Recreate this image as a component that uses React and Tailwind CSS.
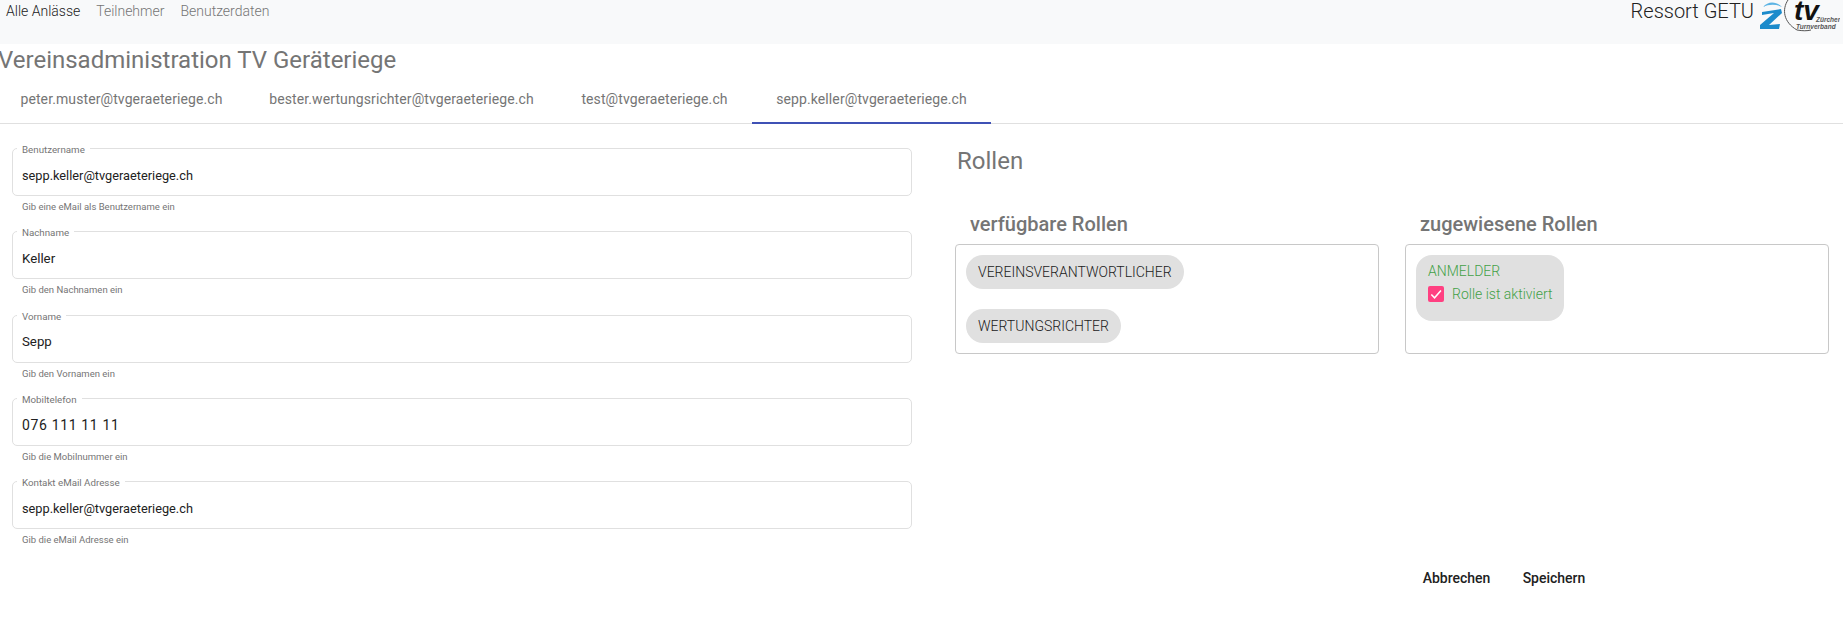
import React from "react";

const tabs = [
  { label: "peter.muster@tvgeraeteriege.ch", width: "w-[249px]" },
  { label: "bester.wertungsrichter@tvgeraeteriege.ch", width: "w-[311px]" },
  { label: "test@tvgeraeteriege.ch", width: "w-[195px]" },
  { label: "sepp.keller@tvgeraeteriege.ch", width: "w-[239px]", active: true },
];

const fields = [
  { label: "Benutzername", value: "sepp.keller@tvgeraeteriege.ch", hint: "Gib eine eMail als Benutzername ein", valueClass: "text-[12.75px]" },
  { label: "Nachname", value: "Keller", hint: "Gib den Nachnamen ein", valueClass: "text-[13.25px]" },
  { label: "Vorname", value: "Sepp", hint: "Gib den Vornamen ein", valueClass: "text-[13.25px]" },
  { label: "Mobiltelefon", value: "076 111 11 11", hint: "Gib die Mobilnummer ein", valueClass: "text-[14px] tracking-[0.65px]" },
  { label: "Kontakt eMail Adresse", value: "sepp.keller@tvgeraeteriege.ch", hint: "Gib die eMail Adresse ein", valueClass: "text-[12.75px]" },
];

const Logo = () => (
  <svg width="83" height="33" viewBox="0 0 83 33" className="shrink-0">
    <path d="M6 7 C11 1 19 1 25 7 C19 4 12 4 6 7 Z" fill="#5db4e4" />
    <path d="M5 12 L24 9 L25 13 L12 25 L23 24 L22 29 L3 29 L3 25 L17 13 L5 15 Z" fill="#1b8bcb" />
    <path d="M31 0 C25 9 26 22 40 30 C46 31 50 31 54 30" fill="none" stroke="#555" strokeWidth="1" />
    <text x="37" y="20" fontFamily="Liberation Sans" fontSize="28" fontWeight="700" fontStyle="italic" fill="#111">tv</text>
    <text x="59" y="22" fontFamily="Liberation Sans" fontSize="6.5" fontWeight="700" fontStyle="italic" fill="#555">Zürcher</text>
    <text x="39" y="28.5" fontFamily="Liberation Sans" fontSize="6.5" fontWeight="700" fontStyle="italic" fill="#555">Turnverband</text>
  </svg>
);

const Field = ({ label, value, hint, valueClass }) => (
  <div className="flex flex-col">
    <div className="relative flex h-[48px] items-center rounded-[5px] border border-[#e0e0e0] px-[9px] pt-[7px]">
      <span className="absolute -top-[5px] left-[4px] bg-white px-[5px] text-[9.75px] leading-[12px] text-[#757575]">{label}</span>
      <span className={`text-[#212121] ${valueClass}`}>{value}</span>
    </div>
    <p className="mt-[5px] px-[10px] text-[9.5px] leading-[12px] text-[#757575]">{hint}</p>
  </div>
);

const App = () => (
  <div className="min-h-[628px] w-[1843px] overflow-hidden bg-white font-['Roboto',sans-serif]">
    <header className="flex h-[44px] items-start justify-between bg-[#f8f9fa] pl-[6px] pr-[3px]">
      <nav className="flex gap-[16px] text-[14px] font-light leading-[23px] text-[#757575]">
        <span className="text-[#212121]">Alle Anlässe</span>
        <span>Teilnehmer</span>
        <span>Benutzerdaten</span>
      </nav>
      <div className="flex items-start gap-[3px]">
        <span className="text-[20px] font-light leading-[23px] text-[#212121]">Ressort GETU</span>
        <Logo />
      </div>
    </header>

    <h1 className="-ml-[2px] mt-[2px] text-[24px] font-normal leading-[28px] text-[#757575]">
      Vereinsadministration TV Geräteriege
    </h1>

    <div className="-ml-[3px] mt-[2px] flex h-[48px] w-[1846px] border-b border-[#e0e0e0]">
      {tabs.map((tab) => (
        <div
          key={tab.label}
          className={`flex h-[48px] items-center justify-center text-[14px] font-normal tracking-[0.1px] text-[#757575] ${tab.width} ${tab.active ? "border-b-2 border-[#3f51b5]" : "pb-[2px]"}`}
        >
          {tab.label}
        </div>
      ))}
    </div>

    <main className="flex pl-[12px] pt-[24px]">
      <section className="flex w-[900px] shrink-0 flex-col gap-[18.25px]">
        {fields.map((field) => (
          <Field key={field.label} {...field} />
        ))}
      </section>

      <section className="-mt-[1px] ml-[43px] flex w-[874px] flex-col">
        <h2 className="ml-[2px] text-[24px] font-normal leading-[28px] text-[#757575]">Rollen</h2>
        <div className="mt-[37px] flex gap-[26px]">
          <div className="w-[424px]">
            <h3 className="ml-[15px] text-[20px] font-medium leading-[24px] text-[#757575]">verfügbare Rollen</h3>
            <div className="mt-[8px] flex h-[110px] flex-col items-start gap-[20px] rounded-[4px] border border-[#c8c8c8] p-[10px]">
              <span className="flex h-[34px] items-center rounded-[17px] bg-[#e0e0e0] px-[12px] text-[14px] font-light text-[#212121]">VEREINSVERANTWORTLICHER</span>
              <span className="flex h-[34px] items-center rounded-[17px] bg-[#e0e0e0] px-[12px] text-[14px] font-light text-[#212121]">WERTUNGSRICHTER</span>
            </div>
          </div>
          <div className="w-[424px]">
            <h3 className="ml-[15px] text-[20px] font-medium leading-[24px] text-[#757575]">zugewiesene Rollen</h3>
            <div className="mt-[8px] flex h-[110px] flex-col items-start rounded-[4px] border border-[#c8c8c8] p-[10px]">
              <div className="flex h-[66px] w-[148px] flex-col rounded-[16px] bg-[#e0e0e0] px-[12px] pt-[7px] text-[14px] font-light text-[#43a047]">
                <span className="leading-[18px]">ANMELDER</span>
                <div className="mt-[5px] flex items-center gap-[8px] whitespace-nowrap">
                  <span className="flex h-[16px] w-[16px] shrink-0 items-center justify-center rounded-[2px] bg-[#ff4081]">
                    <svg width="14" height="14" viewBox="0 0 24 24" fill="none" stroke="#fff" strokeWidth="2.6">
                      <path d="M4 13 L9.5 18.5 L20.5 6" />
                    </svg>
                  </span>
                  <span className="leading-[18px]">Rolle ist aktiviert</span>
                </div>
              </div>
            </div>
          </div>
        </div>
      </section>
    </main>

    <footer className="mt-[14px] flex w-[1601px] justify-end">
      <button className="h-[36px] w-[99px] text-[14px] font-medium text-[#212121]">Abbrechen</button>
      <button className="ml-[1px] h-[36px] w-[94px] text-[14px] font-medium text-[#212121]">Speichern</button>
    </footer>
  </div>
);

export default App;
